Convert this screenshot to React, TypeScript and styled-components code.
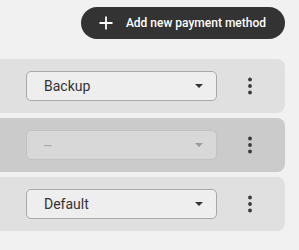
import styled, { createGlobalStyle } from "styled-components";

const GlobalStyle = createGlobalStyle`
  body {
    margin: 0;
    background: #f1f1f1;
    font-family: Roboto, "Noto Sans", "Liberation Sans", sans-serif;
  }
`;

type Method = { id: number; label: string; disabled?: boolean };

const methods: Method[] = [
  { id: 1, label: "Backup" },
  { id: 2, label: "--", disabled: true },
  { id: 3, label: "Default" },
];

export default function App() {
  return (
    <>
      <GlobalStyle />
      <Page>
        <Header>
          <AddButton>
            <PlusIcon />
            Add new payment method
          </AddButton>
        </Header>

        <List>
          {methods.map((m) => (
            <Row key={m.id} disabled={m.disabled}>
              <Select disabled={m.disabled}>
                <span>{m.label}</span>
                <Caret disabled={m.disabled} />
              </Select>
              <MenuButton>
                <KebabIcon />
              </MenuButton>
            </Row>
          ))}
        </List>
      </Page>
    </>
  );
}

function PlusIcon() {
  return (
    <svg width="14" height="14" viewBox="0 0 14 14">
      <path d="M7 0.5v13M0.5 7h13" stroke="#fff" strokeWidth="1.8" />
    </svg>
  );
}

function KebabIcon() {
  return (
    <svg width="24" height="24" viewBox="0 0 24 24">
      <circle cx="12" cy="5.5" r="1.9" fill="#3a3a3a" />
      <circle cx="12" cy="12" r="1.9" fill="#3a3a3a" />
      <circle cx="12" cy="18.5" r="1.9" fill="#3a3a3a" />
    </svg>
  );
}

const Page = styled.div`
  width: 299px;
  height: 250px;
  overflow: hidden;
`;

const Header = styled.div`
  display: flex;
  justify-content: flex-end;
  padding: 7px 14px 0 0;
`;

const AddButton = styled.button`
  display: flex;
  align-items: center;
  gap: 13px;
  height: 32px;
  padding: 0 19px 0 18px;
  border: none;
  border-radius: 16px;
  background: #333333;
  color: #ffffff;
  font-family: inherit;
  font-size: 12px;
  font-weight: 500;
  cursor: pointer;
`;

const List = styled.div`
  display: flex;
  flex-direction: column;
  gap: 5px;
  margin: 20px 14px 0 -10px;
`;

const Row = styled.div<{ disabled?: boolean }>`
  display: flex;
  align-items: center;
  height: 54px;
  padding: 0 23px 0 36px;
  border-radius: 8px;
  background: ${({ disabled }) => (disabled ? "#cbcbcb" : "#e0e0e0")};
`;

const Select = styled.div<{ disabled?: boolean }>`
  box-sizing: border-box;
  display: flex;
  align-items: center;
  justify-content: space-between;
  width: 191px;
  height: 30px;
  padding: 0 13px 0 17px;
  border-radius: 5px;
  border: 1px solid ${({ disabled }) => (disabled ? "#c2c2c2" : "#a8a8a8")};
  background: ${({ disabled }) => (disabled ? "#d8d8d8" : "#eeeeee")};
  color: ${({ disabled }) => (disabled ? "#a3a3a3" : "#333333")};
  font-size: 14px;
`;

const Caret = styled.span<{ disabled?: boolean }>`
  width: 0;
  height: 0;
  border-left: 4px solid transparent;
  border-right: 4px solid transparent;
  border-top: 4px solid ${({ disabled }) => (disabled ? "#9a9a9a" : "#333333")};
`;

const MenuButton = styled.div`
  display: flex;
  margin-left: auto;
`;
